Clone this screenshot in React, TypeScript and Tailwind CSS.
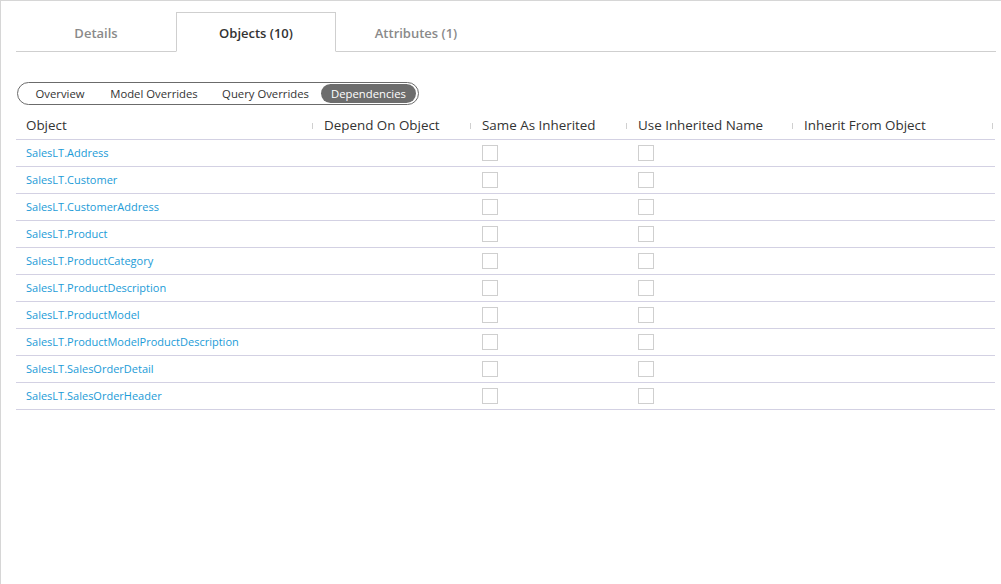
import { useState } from 'react';

const tabs = ['Details', 'Objects (10)', 'Attributes (1)'];

const views = [
  { label: 'Overview', w: 'w-[76px]' },
  { label: 'Model Overrides', w: 'w-[112px]' },
  { label: 'Query Overrides', w: 'w-[111px]' },
  { label: 'Dependencies', w: 'w-[95px]' },
];

const columns = [
  { label: 'Object', w: 'w-[298px]' },
  { label: 'Depend On Object', w: 'w-[158px]' },
  { label: 'Same As Inherited', w: 'w-[156px]' },
  { label: 'Use Inherited Name', w: 'w-[166px]' },
  { label: 'Inherit From Object', w: 'w-[200px]' },
];

const objetos = [
  'SalesLT.Address',
  'SalesLT.Customer',
  'SalesLT.CustomerAddress',
  'SalesLT.Product',
  'SalesLT.ProductCategory',
  'SalesLT.ProductDescription',
  'SalesLT.ProductModel',
  'SalesLT.ProductModelProductDescription',
  'SalesLT.SalesOrderDetail',
  'SalesLT.SalesOrderHeader',
];

function Checkbox() {
  return <span className="block w-4 h-4 border border-[#cfcfcf] bg-white" />;
}

export default function App() {
  const [tab, setTab] = useState(1);
  const [view, setView] = useState(3);

  return (
    <div className="w-[1001px] h-[584px] bg-white border-t border-l border-[#d6d6d6] pl-[15px] pt-[11px] font-['Open_Sans',sans-serif] overflow-hidden">
      <div className="w-[980px] flex border-b border-[#cfcfcf]">
        {tabs.map((t, i) => (
          <button
            key={t}
            onClick={() => setTab(i)}
            className={`w-[160px] h-[40px] -mb-px pt-[3px] text-[13px] font-semibold ${
              i === tab
                ? 'bg-white border border-[#cfcfcf] border-b-white text-[#333]'
                : 'text-[#8a8a8a] border border-transparent'
            }`}
          >
            {t}
          </button>
        ))}
      </div>

      <div className="mt-[30px] ml-px w-[402px] h-[23px] flex items-center pl-[4px] border border-[#6b6b6b] rounded-full">
        {views.map((v, i) => (
          <button
            key={v.label}
            onClick={() => setView(i)}
            className={`${v.w} h-[19px] rounded-full text-[11.3px] leading-none ${
              i === view ? 'bg-[#6d6d6d] text-white' : 'text-[#333]'
            }`}
          >
            {v.label}
          </button>
        ))}
      </div>

      <div className="mt-[7px] w-[979px]">
        <div className="flex h-[28px] border-b border-[#d3d1e3]">
          {columns.map(c => (
            <div key={c.label} className={`${c.w} relative flex items-center pl-[10px] text-[13.4px] text-[#333]`}>
              {c.label}
              <span className="absolute right-px top-[11px] w-px h-[6px] bg-[#d0d0d0]" />
            </div>
          ))}
        </div>
        {objetos.map(o => (
          <div key={o} className="flex h-[27px] border-b border-[#d3d1e3] text-[11px]">
            <div className="w-[298px] pl-[10px] flex items-center text-[#1b9bd7]">{o}</div>
            <div className="w-[158px]" />
            <div className="w-[156px] pl-[10px] flex items-center"><Checkbox /></div>
            <div className="w-[166px] pl-[10px] flex items-center"><Checkbox /></div>
            <div className="w-[200px]" />
          </div>
        ))}
      </div>
    </div>
  );
}
